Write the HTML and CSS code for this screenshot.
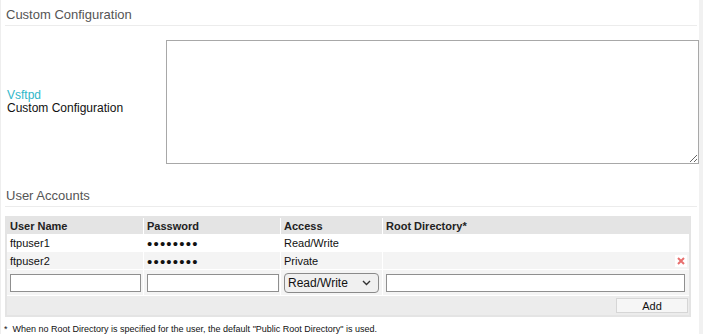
FILE: index.html
```html
<!DOCTYPE html>
<html lang="en">
<head>
  <meta charset="UTF-8" />
  <title>FTP Server Settings</title>
  <link rel="stylesheet" href="styles.css">
</head>
<body>
  <div class="page">
    <h3 class="section-title">Custom Configuration</h3>

    <div class="config-row">
      <label class="config-label" for="custom">
        <span class="app-name">Vsftpd</span><br>Custom Configuration
      </label>
      <textarea id="custom" class="config-text"></textarea>
    </div>

    <h3 class="section-title accounts-title">User Accounts</h3>

    <table class="accounts">
      <colgroup>
        <col class="c-user"><col class="c-pass"><col class="c-access"><col class="c-root">
      </colgroup>
      <thead>
        <tr><th>User Name</th><th>Password</th><th>Access</th><th>Root Directory*</th></tr>
      </thead>
      <tbody>
        <tr class="row-odd">
          <td>ftpuser1</td><td><span class="pw">••••••••</span></td><td>Read/Write</td><td></td>
        </tr>
        <tr class="row-even">
          <td>ftpuser2</td><td><span class="pw">••••••••</span></td><td>Private</td>
          <td class="del-cell">
            <span class="del" title="Delete">
              <svg width="8" height="8" viewBox="0 0 8 8"><path d="M1 1L7 7M7 1L1 7" stroke="#e8706f" stroke-width="2"/></svg>
            </span>
          </td>
        </tr>
        <tr class="row-input">
          <td><input type="text" class="field"></td>
          <td><input type="password" class="field"></td>
          <td>
            <div class="select-wrap">
              <select class="field select">
                <option>Read/Write</option><option>Read Only</option><option>Private</option>
              </select>
              <svg class="chevron" width="9" height="6" viewBox="0 0 9 6"><path d="M1 1L4.5 4.5L8 1" fill="none" stroke="#333" stroke-width="1.4"/></svg>
            </div>
          </td>
          <td><input type="text" class="field"></td>
        </tr>
        <tr class="row-add">
          <td colspan="4"><button class="add-btn">Add</button></td>
        </tr>
      </tbody>
    </table>

    <p class="note">*&nbsp; When no Root Directory is specified for the user, the default "Public Root Directory" is used.</p>
  </div>
</body>
</html>
```

FILE: styles.css
```css
html, body { margin: 0; padding: 0; }
body { font-family: "Liberation Sans", Arial, sans-serif; font-size: 12px; color: #111; background: #f1f1f1; }
.page { width: 698px; min-height: 334px; background: #fff; border-left: 1px solid #eee; overflow: visible; }

.section-title { margin: 0 2px 0 4px; padding: 7px 1px 3px; font-size: 13px; line-height: 15px; font-weight: normal; color: #555; border-bottom: 1px solid #ececec; }
.accounts-title { margin-top: 17px; }

.config-row { display: flex; align-items: center; margin-top: 14px; }
.config-label { width: 159px; padding-left: 6px; line-height: 13px; font-size: 12px; color: #111; }
.app-name { color: #2fb7c9; }
.config-text { width: 535px; height: 124px; margin: 0; box-sizing: border-box; border: 1px solid #a8a8a8; border-radius: 0; background: #fff; }

.accounts { margin: 9px 0 0 4px; width: 686px; border-collapse: separate; border-spacing: 0; border: 2px solid #e4e4e4; table-layout: fixed; font-size: 11px; }
.c-user { width: 136px; }
.c-pass { width: 137px; }
.c-access { width: 102px; }
.accounts th, .accounts td { padding: 0 3px; text-align: left; border-left: 1px solid #fff; vertical-align: middle; }
.accounts tr > :first-child { border-left: none; }
.accounts th { background: #e4e4e4; height: 16px; font-weight: bold; color: #222; }
.row-odd td { height: 17px; background: #fff; }
.row-even td { height: 17px; background: #f4f4f4; border-top: 1px solid #fff; }
.row-input td { height: 25px; background: #f4f4f4; border-top: 1px solid #fff; }
.accounts .row-add td { height: 19px; background: #ececec; border-top: 1px solid #fff; text-align: right; padding-right: 1px; }

.pw { font-size: 15px; line-height: 11px; letter-spacing: 1.2px; vertical-align: top; position: relative; top: 1px; }
.accounts .del-cell { text-align: right; padding-right: 2px; }
.del { display: inline-block; width: 12px; height: 12px; background: #fff; text-align: center; vertical-align: middle; }
.del svg { display: block; margin: 2px auto 0; }

.field { display: block; width: 100%; height: 18px; box-sizing: border-box; margin: 0; border: 1px solid #8f8f8f; background: #fff; font: 11px "Liberation Sans", Arial, sans-serif; padding: 0 2px; }
.row-input td:first-child .field { width: 131px; }
.row-input td:nth-child(2) .field { width: 132px; }
.row-input td:last-child .field { width: 299px; }

.select-wrap { position: relative; width: 95px; }
.select { width: 95px; height: 20px; border-radius: 4px; background: #f0f0f0; border: 1px solid #8a8a8a; font-size: 12px; padding: 0 3px; -webkit-appearance: none; appearance: none; color: #111; }
.chevron { position: absolute; right: 8px; top: 7px; pointer-events: none; }

.add-btn { width: 72px; height: 15px; padding: 0; border: 1px solid #d6d6d6; background: #f6f6f6; font: 11px "Liberation Sans", Arial, sans-serif; color: #111; vertical-align: middle; }

.note { margin: 7px 0 0 3px; font-size: 9px; color: #111; }
```
